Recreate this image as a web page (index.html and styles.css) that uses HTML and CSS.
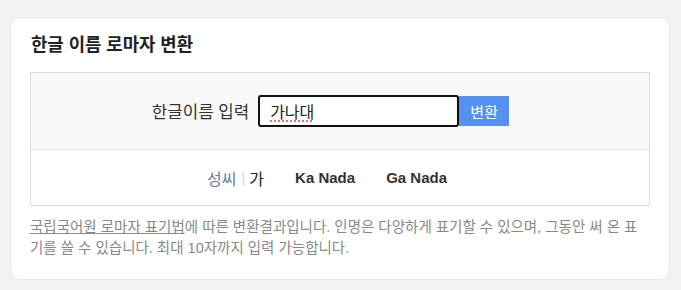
FILE: index.html
```html
<!DOCTYPE html>
<html lang="ko">
<head>
<meta charset="utf-8">
<title>한글 이름 로마자 변환</title>
<link rel="stylesheet" href="styles.css">
</head>
<body>
<div class="card">
  <h2 class="title">한글 이름 로마자 변환</h2>
  <div class="panel">
    <form class="input-row">
      <label class="label" for="name">한글이름 입력</label>
      <input class="name-input" id="name" type="text" value="가나대" maxlength="10">
      <button class="btn" type="button">변환</button>
    </form>
    <div class="result-row">
      <span class="surname">성씨</span><span class="sep">|</span><span class="given">가</span>
      <span class="roman">Ka Nada</span>
      <span class="roman">Ga Nada</span>
    </div>
  </div>
  <p class="note"><a class="link" href="#">국립국어원 로마자 표기법</a>에 따른 변환결과입니다. 인명은 다양하게 표기할 수 있으며, 그동안 써 온 표기를 쓸 수 있습니다. 최대 10자까지 입력 가능합니다.</p>
</div>
</body>
</html>
```
FILE: styles.css
```css
html, body {
  margin: 0;
  padding: 0;
}
body {
  background: #f1f2f6;
  font-family: "Liberation Sans", "Noto Sans CJK KR", sans-serif;
  color: #333;
}
.card {
  margin: 17px 11px 10px 10px;
  height: 263px;
  box-sizing: border-box;
  background: #fff;
  border: 1px solid #e6e7eb;
  border-radius: 10px;
  padding: 15px 19px 0 19px;
}
.title {
  margin: 0 0 15px 1px;
  font-size: 17.8px;
  line-height: 24px;
  font-weight: bold;
  color: #222;
}
.panel {
  border: 1px solid #dcdcdc;
}
.input-row {
  margin: 0;
  height: 76px;
  background: #f9f9f9;
  border-bottom: 1px solid #e2e2e2;
  display: flex;
  align-items: center;
  justify-content: center;
  padding-right: 19px;
}
.label {
  font-size: 16.8px;
  color: #333;
  margin-right: 9px;
}
.name-input {
  box-sizing: border-box;
  width: 201px;
  height: 32px;
  border: 2px solid #111;
  border-radius: 3px;
  padding: 0 10px;
  font-family: "Liberation Sans", "Noto Sans CJK KR", sans-serif;
  font-size: 16px;
  color: #222;
  background: #fff;
  outline: none;
  text-decoration: underline dotted #e05050;
  text-underline-offset: 3px;
}
.btn {
  height: 30px;
  width: 50px;
  border: 0;
  background: #5591f0;
  color: #fff;
  font-family: "Liberation Sans", "Noto Sans CJK KR", sans-serif;
  font-size: 15px;
  padding: 0;
  cursor: pointer;
}
.result-row {
  height: 55px;
  display: flex;
  align-items: center;
  justify-content: center;
  padding-right: 26px;
  font-size: 15px;
}
.surname {
  color: #5a7ca4;
  font-size: 16px;
}
.sep {
  color: #d8d8d8;
  margin: 0 4px 0 5px;
}
.given {
  color: #222;
  font-size: 16px;
}
.roman {
  font-weight: bold;
  color: #333;
  margin-left: 31px;
}
.note {
  margin: 11px 0 0 0;
  font-size: 14.5px;
  line-height: 21px;
  color: #888;
}
.link {
  color: #888;
  text-decoration: underline;
}
```
